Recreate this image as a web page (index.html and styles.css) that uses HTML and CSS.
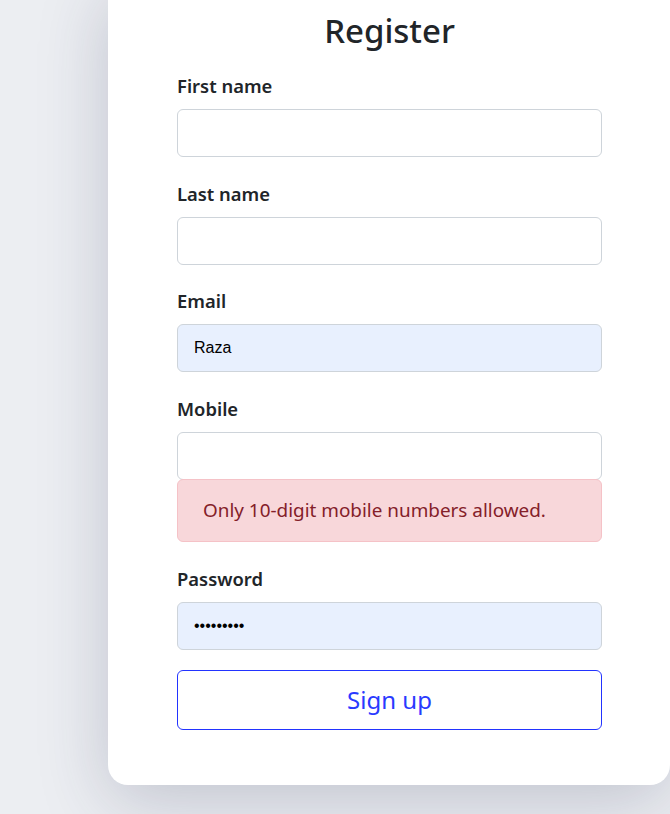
FILE: index.html
```html
<!DOCTYPE html>
<html lang="en">
<head>
<meta charset="utf-8">
<title>Register</title>
<link rel="stylesheet" href="styles.css">
</head>
<body>
<div class="page">
  <div class="card">
    <h1 class="title">Register</h1>
    <form class="form">
      <div class="group">
        <label class="label" for="fn">First name</label>
        <input class="input" id="fn" type="text">
      </div>
      <div class="group">
        <label class="label" for="ln">Last name</label>
        <input class="input" id="ln" type="text">
      </div>
      <div class="group">
        <label class="label" for="em">Email</label>
        <input class="input autofill" id="em" type="text" value="Raza">
      </div>
      <div class="group">
        <label class="label" for="mo">Mobile</label>
        <input class="input" id="mo" type="text">
        <div class="alert">Only 10-digit mobile numbers allowed.</div>
      </div>
      <div class="group">
        <label class="label" for="pw">Password</label>
        <input class="input autofill pw" id="pw" type="password" value="123456789">
      </div>
      <button class="btn" type="button">Sign up</button>
    </form>
  </div>
</div>
</body>
</html>
```
FILE: styles.css
```css
* { box-sizing: border-box; }
html, body { margin: 0; padding: 0; }
body {
  background: #eceef2;
  font-family: "Noto Sans", "Open Sans", sans-serif;
  color: #212529;
  overflow: hidden;
  height: 814px;
}
.page {
  padding-left: 108px;
}
.card {
  width: 562px;
  margin-top: -20px;
  padding: 29px 68px 55px 69px;
  background: #fff;
  border-radius: 20px;
  box-shadow: 0 16px 70px rgba(40, 44, 80, 0.22);
}
.title {
  margin: 0 0 19px;
  font-size: 33px;
  line-height: 44px;
  font-weight: 500;
  text-align: center;
  color: #212529;
}
.form { display: flex; flex-direction: column; }
.group {
  display: flex;
  flex-direction: column;
  margin-bottom: 22.7px;
}
.label {
  font-size: 18.4px;
  line-height: 28px;
  font-weight: 600;
  margin-bottom: 9px;
  color: #212529;
}
.input {
  height: 48px;
  width: 100%;
  border: 1px solid #ced4da;
  border-radius: 6px;
  background: #fff;
  padding: 0 16px;
  font-family: "Liberation Sans", Arial, sans-serif;
  font-size: 16px;
  color: #000;
  outline: none;
}
.autofill { background: #e8f0fe; }
.pw { font-size: 16px; letter-spacing: 0; }
.alert {
  margin-top: -1px;
  padding: 16px 25px 16px;
  border: 1px solid #f5c2c7;
  border-radius: 6px;
  background: #f8d7da;
  color: #842029;
  font-size: 18.9px;
  line-height: 29px;
}
.btn {
  margin-top: -2.5px;
  height: 60px;
  width: 100%;
  border: 1px solid #2233ff;
  border-radius: 6px;
  background: #fff;
  color: #2a3aff;
  font-family: "Noto Sans", "Open Sans", sans-serif;
  font-size: 24px;
  line-height: 36px;
  padding: 11px 0;
  cursor: pointer;
}
```
